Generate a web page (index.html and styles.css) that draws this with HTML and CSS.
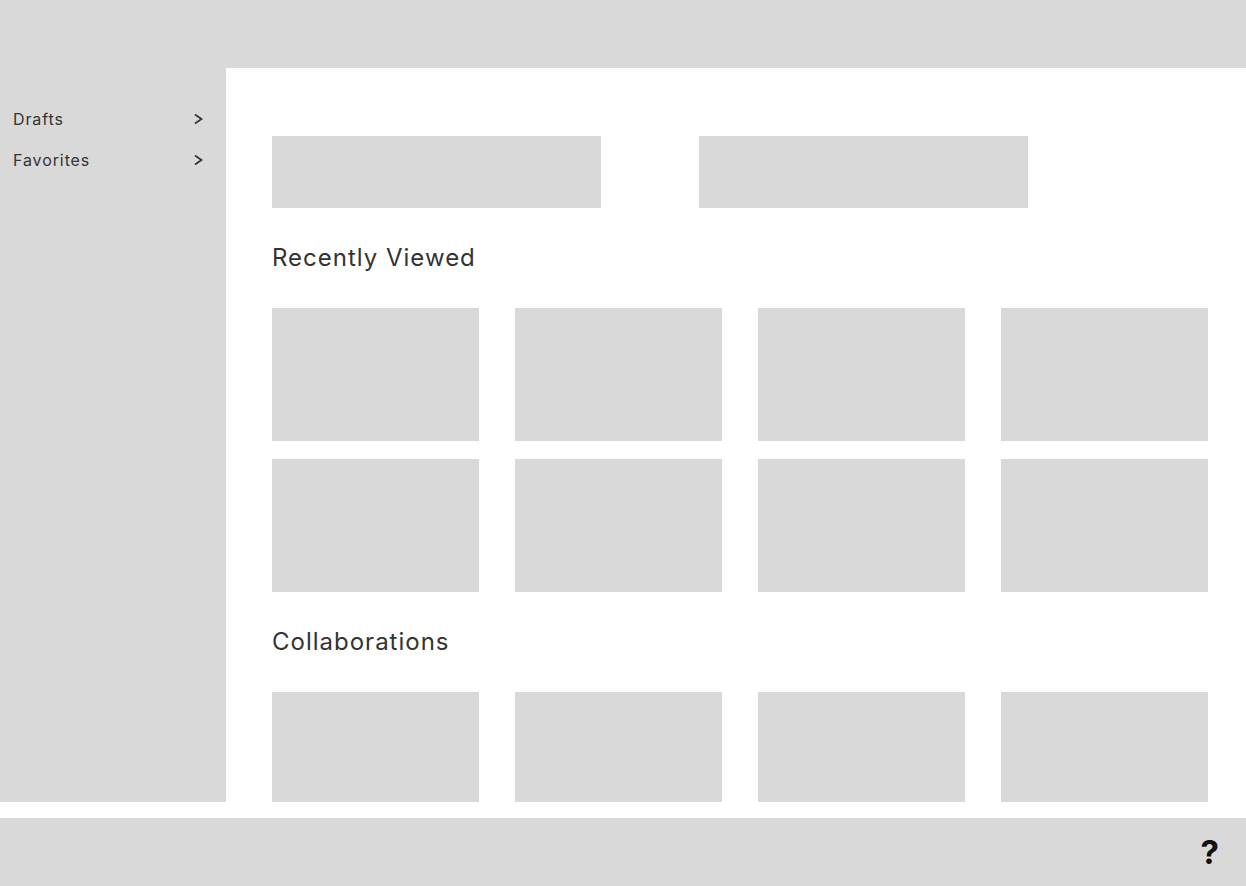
FILE: index.html
```html
<!DOCTYPE html>
<html lang="en">
<head>
    <meta charset="UTF-8">
    <meta name="viewport" content="width=device-width, initial-scale=1.0">
    <title>Home</title>
    <link rel="stylesheet" href="styles.css">
</head>
<body>
    <header class="topbar"></header>
    <div class="layout">
        <aside class="sidebar">
            <ul class="side-nav">
                <li>
                    <span>Drafts</span>
                    <svg class="chevron" width="10" height="12" viewBox="0 0 10 12"><polyline points="2,1.5 8.5,6 2,10.5" /></svg>
                </li>
                <li>
                    <span>Favorites</span>
                    <svg class="chevron" width="10" height="12" viewBox="0 0 10 12"><polyline points="2,1.5 8.5,6 2,10.5" /></svg>
                </li>
            </ul>
        </aside>
        <main class="content">
            <div class="banners">
                <div class="banner"></div>
                <div class="banner"></div>
            </div>
            <h2 class="section-title">Recently Viewed</h2>
            <div class="tile-grid">
                <div class="tile"></div>
                <div class="tile"></div>
                <div class="tile"></div>
                <div class="tile"></div>
                <div class="tile"></div>
                <div class="tile"></div>
                <div class="tile"></div>
                <div class="tile"></div>
            </div>
            <h2 class="section-title">Collaborations</h2>
            <div class="tile-grid">
                <div class="tile"></div>
                <div class="tile"></div>
                <div class="tile"></div>
                <div class="tile"></div>
            </div>
        </main>
    </div>
    <footer class="footer">
        <span class="help">?</span>
    </footer>
</body>
</html>
```

FILE: styles.css
```css
body {
    font-family: Inter, "Noto Sans", sans-serif;
    background-color: #fff;
    color: #333;
    margin: 0;
    padding: 0;
}
.topbar {
    height: 68px;
    background-color: #d9d9d9;
}
.layout {
    display: flex;
    height: 734px;
    overflow: hidden;
}
.sidebar {
    width: 226px;
    flex-shrink: 0;
    background-color: #d9d9d9;
}
.side-nav {
    list-style: none;
    margin: 0;
    padding: 30px 23px 0 13px;
}
.side-nav li {
    height: 41px;
    display: flex;
    align-items: center;
    justify-content: space-between;
    font-size: 16px;
    letter-spacing: 0.9px;
    color: #333;
}
.chevron polyline {
    fill: none;
    stroke: #333;
    stroke-width: 1.7;
}
.content {
    flex: 1;
    padding: 68px 39px 0 46px;
}
.banners {
    display: flex;
    gap: 98px;
}
.banner {
    width: 329px;
    height: 72px;
    background-color: #d9d9d9;
}
.section-title {
    font-size: 24px;
    font-weight: normal;
    letter-spacing: 1px;
    line-height: 30px;
    margin: 35px 0 35px;
    color: #333;
}
.tile-grid {
    display: grid;
    grid-template-columns: repeat(4, 207px);
    grid-auto-rows: 133px;
    column-gap: 36px;
    row-gap: 18px;
}
.tile {
    background-color: #d9d9d9;
}
.footer {
    height: 68px;
    margin-top: 16px;
    background-color: #d9d9d9;
    display: flex;
    justify-content: flex-end;
    align-items: center;
    padding-right: 27px;
}
.help {
    font-size: 33px;
    font-weight: bold;
    color: #111;
}
```
